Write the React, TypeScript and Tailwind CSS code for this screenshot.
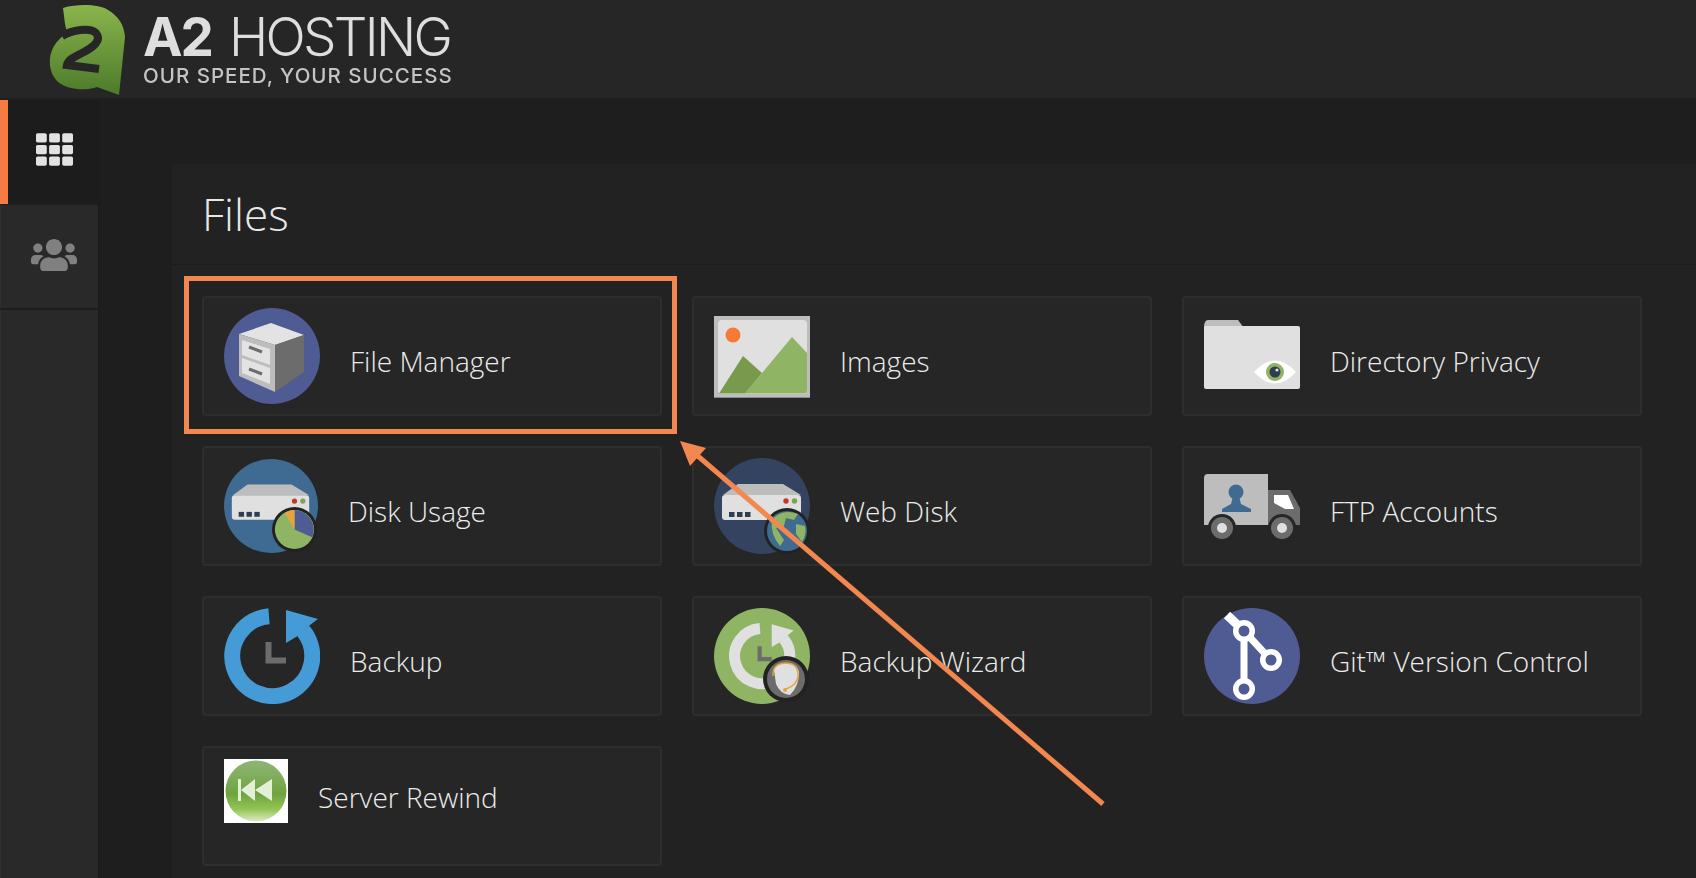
import { FaTh, FaUsers } from "react-icons/fa";

const ServerBox = () => (
  <g>
    <path d="M9 37 L24 26 H69 L87 37 Z" fill="#bdbdbd" />
    <rect x="8" y="37" width="79" height="25" rx="3" fill="#e0e0e0" />
    <circle cx="72" cy="43" r="2.7" fill="#c0392b" />
    <circle cx="80.5" cy="43" r="2.7" fill="#7da453" />
    <rect x="15" y="54" width="5.5" height="5" fill="#2d3e50" />
    <rect x="23" y="54" width="5.5" height="5" fill="#2d3e50" />
    <rect x="31" y="54" width="5.5" height="5" fill="#2d3e50" />
  </g>
);

const FileManagerIcon = () => (
  <svg viewBox="0 0 96 96" className="w-24 h-24 shrink-0">
    <circle cx="48" cy="48" r="48" fill="#4f5b93" />
    <path d="M15 26 L47 15 L80 27 L51 37 Z" fill="#e3e3e3" />
    <path d="M15 26 L51 37 V84 L15 68 Z" fill="#bdbdbd" />
    <path d="M51 37 L80 27 V64 L51 84 Z" fill="#6c6c6c" />
    <path d="M18 32 L46 41 V57 L18 47 Z" fill="#e3e3e3" />
    <path d="M18 50 L46 60 V76 L18 65 Z" fill="#e3e3e3" />
    <path d="M25 39 L38 44 M25 61 L38 66" stroke="#6c6c6c" strokeWidth="3" />
  </svg>
);

const ImagesIcon = () => (
  <svg viewBox="0 0 96 96" className="w-24 h-24 shrink-0">
    <rect x="0" y="8" width="96" height="82" fill="#bdbdbd" />
    <rect x="0" y="89" width="96" height="1" fill="#8a8a8a" />
    <rect x="4" y="12" width="89" height="74" rx="4" fill="#e0e0e0" />
    <circle cx="19" cy="27" r="7.5" fill="#f47a36" />
    <path d="M31 85.5 L78 29 L93 45 V82 Q93 85.5 89 85.5 Z" fill="#8fb464" />
    <path d="M5 85.5 L29 48 L48 65 L31 85.5 Z" fill="#779a4c" />
  </svg>
);

const DirectoryIcon = () => (
  <svg viewBox="0 0 96 96" className="w-24 h-24 shrink-0">
    <path d="M0 20 Q0 12 4 12 H34 L40 20 Z" fill="#bdbdbd" />
    <rect x="0" y="18" width="96" height="63" rx="2" fill="#e0e0e0" />
    <path d="M50 64 Q71 41 92 64 Q71 87 50 64 Z" fill="#ffffff" />
    <circle cx="71" cy="64" r="9" fill="#8fb464" />
    <circle cx="71" cy="64" r="5.5" fill="#2d3e50" />
    <circle cx="73" cy="62" r="1.6" fill="#e0e0e0" />
  </svg>
);

const DiskUsageIcon = () => (
  <svg viewBox="0 0 96 96" className="w-[94px] h-[94px] shrink-0">
    <circle cx="48" cy="48" r="48" fill="#3f6a91" />
    <ServerBox />
    <circle cx="72" cy="72" r="23" fill="#222222" />
    <circle cx="72" cy="72" r="20" fill="#8fb464" />
    <path d="M72 72 V52 A20 20 0 0 1 90 80 Z" fill="#4f5b93" />
    <path d="M72 72 L62 55 A20 20 0 0 1 72 52 Z" fill="#e8a33d" />
  </svg>
);

const WebDiskIcon = () => (
  <svg viewBox="0 0 96 96" className="w-24 h-24 shrink-0">
    <circle cx="48" cy="48" r="48" fill="#34435f" />
    <ServerBox />
    <circle cx="73" cy="73" r="23" fill="#222222" />
    <circle cx="73" cy="73" r="20" fill="#3f6a91" />
    <path d="M58 62 Q68 50 84 56 L80 62 L72 60 L70 68 L62 70 L70 82 L66 88 Q56 76 58 62 Z" fill="#8fb464" />
    <path d="M82 66 L91 68 Q93 76 88 84 L82 76 Z" fill="#8fb464" />
  </svg>
);

const FtpIcon = () => (
  <svg viewBox="0 0 96 96" className="w-24 h-24 shrink-0">
    <path d="M0 20 Q0 16 4 16 H64 V67 H0 Z" fill="#bdbdbd" />
    <path d="M64 32 H86 L96 50 V67 H64 Z" fill="#6c6c6c" />
    <path d="M70 37 H84 L90 51 H81 L70 45 Z" fill="#ffffff" />
    <circle cx="32" cy="34" r="7.5" fill="#3f6a91" />
    <path d="M29 38 H35 L37 46 L47 51 V54 H18 V51 L27 46 Z" fill="#3f6a91" />
    <circle cx="18" cy="70" r="14" fill="#262626" />
    <circle cx="18" cy="70" r="11" fill="#6c6c6c" />
    <circle cx="18" cy="70" r="5" fill="#e0e0e0" />
    <circle cx="78" cy="70" r="14" fill="#262626" />
    <circle cx="78" cy="70" r="11" fill="#6c6c6c" />
    <circle cx="78" cy="70" r="5" fill="#e0e0e0" />
  </svg>
);

const BackupIcon = () => (
  <svg viewBox="0 0 96 96" className="w-24 h-24 shrink-0">
    <path d="M45 8.2 A40 40 0 1 0 79 22.5" fill="none" stroke="#459bd5" strokeWidth="16" />
    <path d="M62 2 L94 11 L86 17 L72 29 L62 35 Z" fill="#459bd5" />
    <path d="M44.5 34 V52.5 H62" fill="none" stroke="#6c6c6c" strokeWidth="6" />
  </svg>
);

const BackupWizardIcon = () => (
  <svg viewBox="0 0 96 96" className="w-24 h-24 shrink-0">
    <circle cx="48" cy="48" r="48" fill="#8fb464" />
    <g transform="translate(14.9 14.9) scale(0.69)">
      <path d="M45 8.2 A40 40 0 1 0 79 22.5" fill="none" stroke="#e0e0e0" strokeWidth="16" />
      <path d="M62 2 L94 11 L86 17 L72 29 L62 35 Z" fill="#e0e0e0" />
      <path d="M44.5 34 V52.5 H62" fill="none" stroke="#6c6c6c" strokeWidth="6" />
    </g>
    <circle cx="72" cy="71" r="23" fill="#222222" />
    <circle cx="72" cy="71" r="19" fill="#6c6c6c" />
    <path d="M60 62 Q62 55 72 55 Q84 55 85 65 Q85 78 76 87 Q66 86 62 76 Z" fill="#e0e0e0" />
    <path d="M59 68 Q58 56 71 55 Q84 55 84 67 Q84 77 72 81" fill="none" stroke="#e8a33d" strokeWidth="1.4" />
    <circle cx="71" cy="82" r="2" fill="#e8a33d" />
  </svg>
);

const GitIcon = () => (
  <svg viewBox="0 0 96 96" className="w-24 h-24 shrink-0">
    <circle cx="48" cy="48" r="48" fill="#4f5b93" />
    <path d="M40 23 V81 M40 23 L67 52" stroke="#ffffff" strokeWidth="7" fill="none" />
    <path d="M23 7 L40 23" stroke="#ffffff" strokeWidth="9" fill="none" />
    {[
      [40, 23],
      [67, 52],
      [40, 81],
    ].map(([cx, cy]) => (
      <g key={cy}>
        <circle cx={cx} cy={cy} r="11" fill="#ffffff" />
        <circle cx={cx} cy={cy} r="5.5" fill="#4f5b93" />
      </g>
    ))}
  </svg>
);

const RewindIcon = () => (
  <svg viewBox="0 0 64 64" className="w-16 h-16 shrink-0">
    <defs>
      <linearGradient id="rewind" x1="0" y1="0" x2="0" y2="1">
        <stop offset="0" stopColor="#8fb676" />
        <stop offset="0.55" stopColor="#6fa33f" />
        <stop offset="0.8" stopColor="#93c455" />
        <stop offset="1" stopColor="#dcecc4" />
      </linearGradient>
    </defs>
    <rect width="64" height="64" fill="#ffffff" />
    <circle cx="32" cy="32" r="30.5" fill="url(#rewind)" />
    <path d="M14 20 H17 V42 H14 Z M17 31 L31 20 V42 Z M31 31 L48 20 V42 Z" fill="#e4efd8" />
  </svg>
);

const LogoMark = () => (
  <svg viewBox="0 0 100 98" className="w-[100px] h-[98px] shrink-0 blur-[0.4px]">
    <defs>
      <linearGradient id="a2" x1="0" y1="0" x2="0" y2="1">
        <stop offset="0" stopColor="#8ab54c" />
        <stop offset="1" stopColor="#4d7a2a" />
      </linearGradient>
    </defs>
    <path
      d="M23 8 C40 3 60 5 68 10 C78 16 84 24 85 37 L79 95 L57 87 C45 91 28 90 18 82 C9 74 7 58 14 46 C18 40 22 36 27 33 L25 24 Z"
      fill="url(#a2)"
    />
    <path d="M22 36 C32 30 50 27 56 33 C62 40 54 47 42 53 C34 57 28 60 27 65 L59 69" fill="none" stroke="#262626" strokeWidth="8" />
  </svg>
);

const items = [
  { label: "File Manager", icon: <FileManagerIcon /> },
  { label: "Images", icon: <ImagesIcon /> },
  { label: "Directory Privacy", icon: <DirectoryIcon /> },
  { label: "Disk Usage", icon: <DiskUsageIcon /> },
  { label: "Web Disk", icon: <WebDiskIcon /> },
  { label: "FTP Accounts", icon: <FtpIcon /> },
  { label: "Backup", icon: <BackupIcon /> },
  { label: "Backup Wizard", icon: <BackupWizardIcon /> },
  { label: "Git™ Version Control", icon: <GitIcon /> },
];

const App = () => {
  return (
    <div className="relative h-[878px] overflow-hidden bg-[#1e1e1e] font-['Open_Sans',sans-serif]">
      <header className="flex h-[100px] items-start gap-[3px] border-b-2 border-[#1f1f1f] bg-[#262626] pl-[40px]">
        <LogoMark />
        <div className="font-['Inter',sans-serif] text-[#dedede] blur-[0.4px]">
          <div className="mt-[12px] flex h-[50px] items-center gap-[17px] text-[53px] leading-none tracking-[-2.7px]">
            <span className="font-bold tracking-[-2px]">A2</span>
            <span className="font-light">HOSTING</span>
          </div>
          <div className="mt-[2px] text-[20.5px] font-medium leading-[24px] tracking-[1px] text-[#c4c4c4]">
            OUR SPEED, YOUR SUCCESS
          </div>
        </div>
      </header>

      <div className="flex h-[778px]">
        <aside className="flex w-[99px] shrink-0 flex-col border-r border-[#1a1a1a]">
          <div className="flex h-[104px] items-center justify-center border-l-8 border-[#f47c44] bg-[#1c1c1c] pb-[6px] pl-[3px] text-[#e2e2e2]">
            <FaTh size={37} />
          </div>
          <div className="mt-[1px] flex h-[103px] items-center justify-center border-l border-[#2f2f2f] bg-[#292929] pb-[4px] pl-[9px] text-[#808080]">
            <FaUsers size={46} />
          </div>
          <div className="mt-[2px] flex-1 border-l border-[#2f2f2f] bg-[#292929]" />
        </aside>

        <main className="min-w-0 flex-1 pl-[73px] pt-[64px]">
          <section className="h-full rounded-tl bg-[#222222]">
            <div className="flex h-[101px] items-center border-b border-[#1c1c1c] pl-[30px]">
              <h2 className="text-[44px] font-light leading-none text-[#e8e8e8]">Files</h2>
            </div>
            <div className="grid grid-cols-[repeat(3,460px)] gap-[30px] pl-[30px] pt-[31px]">
              {items.map((item) => (
                <a
                  key={item.label}
                  href="#"
                  className="flex h-[120px] items-center gap-[30px] rounded border-2 border-[#2e2e2e] bg-[#262626] pl-[20px]"
                >
                  {item.icon}
                  <span className="mt-[10px] text-[28px] font-light text-[#ececec]">{item.label}</span>
                </a>
              ))}
              <a
                href="#"
                className="flex h-[120px] items-start gap-[30px] rounded border-2 border-[#2e2e2e] bg-[#262626] pl-[20px] pt-[11px]"
              >
                <RewindIcon />
                <span className="mt-[17px] text-[28px] font-light text-[#ececec]">Server Rewind</span>
              </a>
            </div>
          </section>
        </main>
      </div>

      {/* annotation drawn over the screenshot */}
      <div className="absolute left-[184px] top-[276px] h-[158px] w-[493px] border-[5px] border-[#f2874f]" />
      <svg className="pointer-events-none absolute left-0 top-0" width="1696" height="878">
        <path d="M692 451 L1103 804" stroke="#f2874f" strokeWidth="5" />
        <path d="M680 441 L706 448 L690 466 Z" fill="#f2874f" />
      </svg>
    </div>
  );
};

export default App;
